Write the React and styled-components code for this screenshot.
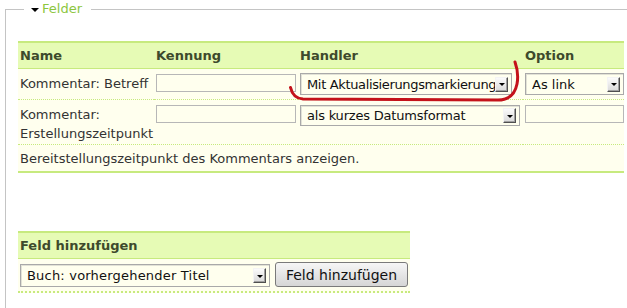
import React from "react";
import styled, { createGlobalStyle } from "styled-components";

const Global = createGlobalStyle`
  html, body { margin: 0; padding: 0; background: #fff; overflow: hidden; }
  body { font-family: "DejaVu Sans", Verdana, sans-serif; font-size: 13px; color: #333; }
`;

const Page = styled.div`
  position: relative;
  width: 627px;
  height: 308px;
  overflow: hidden;
`;

const Fieldset = styled.fieldset`
  margin: 0 0 0 5px;
  padding: 23px 0 40px 12px;
  width: 660px;
  border: 1px solid #c4c4c4;
  border-right: none;
  box-sizing: border-box;
`;

const Legend = styled.legend`
  margin-left: 6px;
  padding: 0 9px 0 7px;
  color: #8cc63e;
  font-size: 13px;
  line-height: 18px;
  display: flex;
  align-items: center;
  gap: 3px;
`;

const Caret = styled.span`
  width: 0;
  height: 0;
  border-left: 4px solid transparent;
  border-right: 4px solid transparent;
  border-top: 4px solid #000;
  margin-top: 1px;
`;

const Table = styled.table`
  width: ${(p) => p.$w}px;
  border-collapse: separate;
  border-spacing: 0;
  table-layout: fixed;
  margin-top: ${(p) => p.$mt || 0}px;
  font-size: 13px;
  line-height: 19px;
`;

const Th = styled.th`
  text-align: left;
  font-weight: bold;
  color: #3d4a2c;
  background: #e6fbb5;
  border-top: 2px solid #c7ea7e;
  border-bottom: 1px solid #c7ea7e;
  padding: 3px 2px 3px;
  width: ${(p) => (p.$w ? p.$w + "px" : "auto")};
  white-space: nowrap;
`;

const Td = styled.td`
  background: #ffffee;
  vertical-align: top;
  padding: ${(p) => p.$pad || "4px 2px 4px"};
  border-bottom: ${(p) =>
    p.$last ? "2px solid #c7ea7e" : p.$thickDot ? "2px dotted #c7ea7e" : "1px dotted #c7ea7e"};
  color: #333;
  overflow: visible;
`;

const Input = styled.div`
  box-sizing: border-box;
  width: ${(p) => p.$w}px;
  height: ${(p) => p.$h}px;
  margin-top: ${(p) => p.$mt || 0}px;
  border: 1px solid #b7b7b7;
  background: #ffffee;
`;

const SelectBox = styled.div`
  box-sizing: border-box;
  display: flex;
  align-items: center;
  width: ${(p) => p.$w}px;
  height: ${(p) => p.$h}px;
  border: 1px solid #a9a9a9;
  box-shadow: inset 1px 1px 0 #e2e2d6;
  background: #ffffee;
  padding: 0 3px 0 6px;
  color: #111;
  font-size: 13px;
  letter-spacing: ${(p) => p.$ls || 0}px;
`;

const SelectLabel = styled.span`
  flex: 1;
  white-space: nowrap;
  overflow: hidden;
`;

const SelectButton = styled.span`
  box-sizing: border-box;
  flex: none;
  width: 13px;
  height: 15px;
  display: flex;
  align-items: center;
  justify-content: center;
  background: linear-gradient(#fbfbfb, #d9d9d9);
  border: 1px solid;
  border-color: #f4f4f4 #4f4f4f #4f4f4f #f4f4f4;
  box-shadow: inset -1px -1px 0 #a0a0a0;
`;

const Arrow = styled.span`
  width: 0;
  height: 0;
  border-left: 3px solid transparent;
  border-right: 3px solid transparent;
  border-top: 3px solid #000;
  margin-top: 1px;
`;

const ActionCell = styled.div`
  display: flex;
  align-items: flex-end;
  gap: 5px;
`;

const Button = styled.button`
  box-sizing: border-box;
  width: 133px;
  height: 25px;
  padding: 0;
  border: 1px solid #7a7a7a;
  border-radius: 3px;
  background: linear-gradient(#f6f6f6, #e4e4e4 55%, #d6d6d6);
  font-family: "DejaVu Sans", Verdana, sans-serif;
  font-size: 14px;
  color: #111;
`;

const Annotation = styled.svg`
  position: absolute;
  left: 0;
  top: 0;
  pointer-events: none;
`;

function Select({ w, h, ls, children }) {
  return (
    <SelectBox $w={w} $h={h} $ls={ls}>
      <SelectLabel>{children}</SelectLabel>
      <SelectButton>
        <Arrow />
      </SelectButton>
    </SelectBox>
  );
}

export default function App() {
  return (
    <Page>
      <Global />
      <Fieldset>
        <Legend>
          <Caret />
          Felder
        </Legend>
        <Table $w={606}>
          <thead>
            <tr>
              <Th $w={132}>Name</Th>
              <Th $w={140}>Kennung</Th>
              <Th $w={221}>Handler</Th>
              <Th>Option</Th>
            </tr>
          </thead>
          <tbody>
            <tr>
              <Td $pad="4px 2px 4px">
                <div style={{ lineHeight: "22px" }}>Kommentar: Betreff</div>
              </Td>
              <Td $pad="4px 2px 4px">
                <Input $w={140} $h={18} $mt={1} />
              </Td>
              <Td $pad="4px 2px 4px">
                <Select w={212} h={22} ls={-0.35}>
                  Mit Aktualisierungsmarkierung
                </Select>
              </Td>
              <Td $pad="4px 2px 4px">
                <Select w={99} h={22}>As link</Select>
              </Td>
            </tr>
            <tr>
              <Td $pad="5px 2px 1px">
                Kommentar:
                <br />
                Erstellungszeitpunkt
              </Td>
              <Td $pad="5px 2px 1px">
                <Input $w={140} $h={18} />
              </Td>
              <Td $pad="5px 2px 1px">
                <Select w={220} h={21} ls={-0.2}>
                  als kurzes Datumsformat
                </Select>
              </Td>
              <Td $pad="5px 2px 1px">
                <Input $w={99} $h={18} />
              </Td>
            </tr>
            <tr>
              <Td colSpan={4} $last $pad="4px 2px 3px">
                Bereitstellungszeitpunkt des Kommentars anzeigen.
              </Td>
            </tr>
          </tbody>
        </Table>

        <Table $w={392} $mt={58}>
          <thead>
            <tr>
              <Th>Feld hinzufügen</Th>
            </tr>
          </thead>
          <tbody>
            <tr>
              <Td $thickDot $pad="3px 2px 4px">
                <ActionCell>
                  <Select w={250} h={23} ls={0.2}>
                    Buch: vorhergehender Titel
                  </Select>
                  <Button>Feld hinzufügen</Button>
                </ActionCell>
              </Td>
            </tr>
          </tbody>
        </Table>
      </Fieldset>

      <Annotation width="627" height="308" viewBox="0 0 627 308">
        <path
          d="M290.5 87.5 C292 94 295 98.5 303 99 L498 100 C509 100 515 94 517 84 C518.5 76 517.5 69 515 62"
          fill="none"
          stroke="#c4121a"
          strokeWidth="3"
          strokeLinecap="round"
        />
      </Annotation>
    </Page>
  );
}
